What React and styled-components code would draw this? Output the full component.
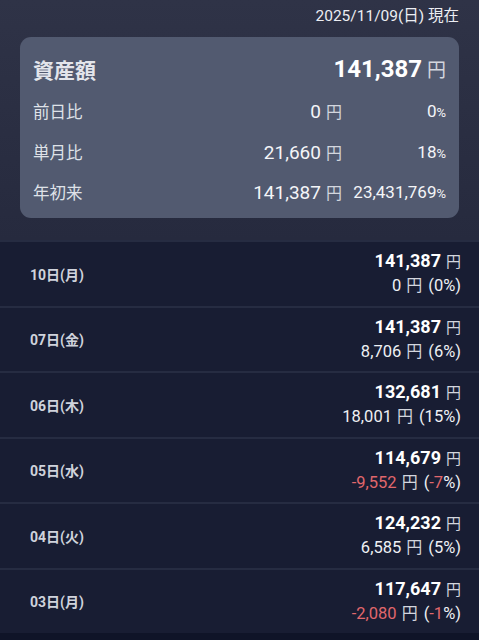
import * as React from 'react';
import styled, { createGlobalStyle } from 'styled-components';

const summary = [
  { label: '前日比', amount: '0', rate: '0' },
  { label: '単月比', amount: '21,660', rate: '18' },
  { label: '年初来', amount: '141,387', rate: '23,431,769' },
];

const days = [
  { day: '10日(月)', total: '141,387', diff: '0', rate: '0' },
  { day: '07日(金)', total: '141,387', diff: '8,706', rate: '6' },
  { day: '06日(木)', total: '132,681', diff: '18,001', rate: '15' },
  { day: '05日(水)', total: '114,679', diff: '-9,552', rate: '-7', down: true },
  { day: '04日(火)', total: '124,232', diff: '6,585', rate: '5' },
  { day: '03日(月)', total: '117,647', diff: '-2,080', rate: '-1', down: true },
];

function App() {
  return (
    <>
      <GlobalStyle />
      <Page>
        <Header>
          <AsOf>2025/11/09(日) 現在</AsOf>
          <Card>
            <TotalRow>
              <TotalLabel>資産額</TotalLabel>
              <TotalValue>
                141,387<Yen $size={19}>円</Yen>
              </TotalValue>
            </TotalRow>
            {summary.map((s) => (
              <StatRow key={s.label}>
                <StatLabel>{s.label}</StatLabel>
                <StatAmount>
                  {s.amount}
                  <Yen $size={16}>円</Yen>
                </StatAmount>
                <StatRate>
                  {s.rate}
                  <Pct>%</Pct>
                </StatRate>
              </StatRow>
            ))}
          </Card>
        </Header>
        <List>
          {days.map((d) => (
            <DayRow key={d.day}>
              <DayLabel>{d.day}</DayLabel>
              <DayValues>
                <DayTotal>
                  {d.total}
                  <Yen $size={15}>円</Yen>
                </DayTotal>
                <DayDiff>
                  <Num $down={d.down}>{d.diff}</Num>
                  <Yen $size={16}>円</Yen>
                  <Paren>
                    (<Num $down={d.down}>{d.rate}</Num>%)
                  </Paren>
                </DayDiff>
              </DayValues>
            </DayRow>
          ))}
        </List>
      </Page>
    </>
  );
}

const GlobalStyle = createGlobalStyle`
  html, body {
    margin: 0;
    padding: 0;
    background: #0f1428;
  }
  body {
    font-family: Roboto, "Noto Sans CJK JP", sans-serif;
    color: #f4f5f8;
  }
`;

const Page = styled.div`
  width: 479px;
  height: 640px;
  overflow: hidden;
  background: #0f1428;
`;

const Header = styled.header`
  background: linear-gradient(180deg, #2f3347 0%, #262a3e 100%);
  padding: 5px 20px 22px 20px;
  height: 240px;
  box-sizing: border-box;
`;

const AsOf = styled.div`
  text-align: right;
  font-size: 15.5px;
  line-height: 22px;
  color: #eceef3;
  margin-bottom: 10px;
`;

const Card = styled.div`
  background: #525a70;
  border-radius: 11px;
  padding: 14px 13px 10px 13px;
  height: 181px;
  box-sizing: border-box;
`;

const TotalRow = styled.div`
  display: flex;
  align-items: center;
  justify-content: space-between;
  height: 36px;
  margin-bottom: 4px;
`;

const TotalLabel = styled.div`
  font-family: "Noto Sans CJK JP", sans-serif;
  font-weight: 700;
  font-size: 21px;
  color: #e3e5eb;
`;

const TotalValue = styled.div`
  font-weight: 700;
  font-size: 24px;
  color: #ffffff;
`;

const Yen = styled.span`
  font-family: "Noto Sans CJK JP", sans-serif;
  font-weight: 400;
  font-size: ${(p) => p.$size}px;
  color: #d3d6de;
  margin-left: 5px;
`;

const StatRow = styled.div`
  display: grid;
  grid-template-columns: 1fr auto 104px;
  align-items: center;
  height: 40.5px;
`;

const StatLabel = styled.div`
  font-family: "Noto Sans CJK JP", sans-serif;
  font-size: 16.5px;
  color: #dfe2e8;
`;

const StatAmount = styled.div`
  font-size: 19px;
  color: #f4f5f8;
  text-align: right;
`;

const StatRate = styled.div`
  font-size: 17px;
  color: #f4f5f8;
  text-align: right;
`;

const Pct = styled.span`
  font-size: 13px;
`;

const List = styled.div`
  display: flex;
  flex-direction: column;
`;

const DayRow = styled.div`
  display: flex;
  align-items: center;
  justify-content: space-between;
  height: 63.5px;
  border-top: 2px solid #262c42;
  background: #181d33;
  padding: 0 18px 0 30px;
`;

const DayLabel = styled.div`
  font-weight: 700;
  font-size: 14px;
  color: #cfd3dc;
`;

const DayValues = styled.div`
  display: flex;
  flex-direction: column;
  align-items: flex-end;
  gap: 1px;
`;

const DayTotal = styled.div`
  font-weight: 700;
  font-size: 18px;
  line-height: 22px;
  color: #ffffff;
`;

const DayDiff = styled.div`
  font-size: 16.5px;
  line-height: 22px;
  color: #eef0f4;
`;

const Num = styled.span`
  color: ${(p) => (p.$down ? '#e0676c' : 'inherit')};
`;

const Paren = styled.span`
  margin-left: 6px;
`;

export default App;
